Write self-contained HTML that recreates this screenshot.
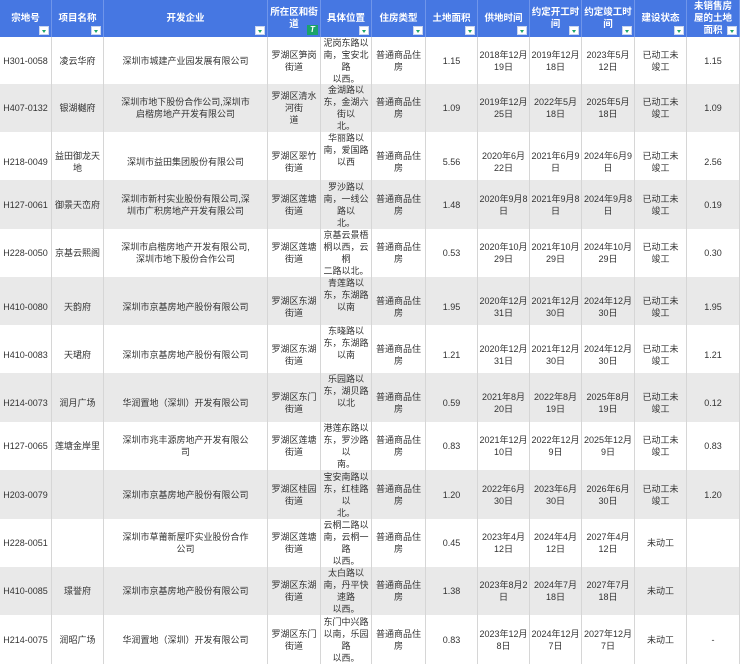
<!DOCTYPE html>
<html><head><meta charset="utf-8">
<style>
*{margin:0;padding:0;box-sizing:border-box}
body{width:740px;height:664px;overflow:hidden;background:#fff;font-family:"Liberation Sans","Noto Sans CJK SC",sans-serif;font-size:9px;color:#333}
.r{position:absolute;left:0;width:740px;display:grid;grid-template-columns:52px 52px 164px 53px 51px 54px 52px 52px 52px 53px 52px 53px}
.r>div{display:flex;align-items:center;justify-content:center;text-align:center;line-height:12px;border-right:1px solid #d6d6d6;position:relative;white-space:nowrap}
.g{background:#e9e9e9}
.h{top:0;height:37px;background:#4677e2}
.h>div{color:#fff;font-weight:bold;font-size:9.5px;border-right:1px solid #6f95ea}
.f{position:absolute;right:2px;bottom:2px;width:10px;height:9px;background:#fff;border:1px solid #c8d4ee}
.f:after{content:"";position:absolute;left:2px;top:3px;border-left:2.5px solid transparent;border-right:2.5px solid transparent;border-top:3px solid #1aa36a}
.fa{position:absolute;right:2px;bottom:2px;width:11px;height:10px;background:#1aa36a;color:#fff;font-size:8px;line-height:10px;font-weight:bold}
</style></head><body>
<div class="r h">
<div>宗地号<i class="f"></i></div><div>项目名称<i class="f"></i></div><div>开发企业<i class="f"></i></div><div>所在区和街<br>道<i class="fa">T</i></div><div>具体位置<i class="f"></i></div><div>住房类型<i class="f"></i></div><div>土地面积<i class="f"></i></div><div>供地时间<i class="f"></i></div><div>约定开工时<br>间<i class="f"></i></div><div>约定竣工时<br>间<i class="f"></i></div><div>建设状态<i class="f"></i></div><div>未销售房<br>屋的土地<br>面积<i class="f"></i></div>
</div>

<div class="r" style="top:37px;height:47px"><div>H301-0058</div><div>凌云华府</div><div>深圳市城建产业园发展有限公司</div><div>罗湖区笋岗<br>街道</div><div>泥岗东路以<br>南，宝安北<br>路<br>以西。</div><div>普通商品住<br>房</div><div>1.15</div><div>2018年12月<br>19日</div><div>2019年12月<br>18日</div><div>2023年5月<br>12日</div><div>已动工未<br>竣工</div><div>1.15</div></div>

<div class="r g" style="top:84px;height:48px"><div>H407-0132</div><div>银湖樾府</div><div>深圳市地下股份合作公司,深圳市<br>启楷房地产开发有限公司</div><div>罗湖区清水<br>河街<br>道</div><div>金湖路以<br>东，金湖六<br>街以<br>北。</div><div>普通商品住<br>房</div><div>1.09</div><div>2019年12月<br>25日</div><div>2022年5月<br>18日</div><div>2025年5月<br>18日</div><div>已动工未<br>竣工</div><div>1.09</div></div>

<div class="r" style="top:132px;height:48px"><div>H218-0049</div><div>益田御龙天<br>地</div><div>深圳市益田集团股份有限公司</div><div>罗湖区翠竹<br>街道</div><div>华丽路以<br>南，爱国路<br>以西<br><br>。</div><div>普通商品住<br>房</div><div>5.56</div><div>2020年6月<br>22日</div><div>2021年6月9<br>日</div><div>2024年6月9<br>日</div><div>已动工未<br>竣工</div><div>2.56</div></div>

<div class="r g" style="top:180px;height:49px"><div>H127-0061</div><div>御景天峦府</div><div>深圳市新村实业股份有限公司,深<br>圳市广积房地产开发有限公司</div><div>罗湖区莲塘<br>街道</div><div>罗沙路以<br>南，一线公<br>路以<br>北。</div><div>普通商品住<br>房</div><div>1.48</div><div>2020年9月8<br>日</div><div>2021年9月8<br>日</div><div>2024年9月8<br>日</div><div>已动工未<br>竣工</div><div>0.19</div></div>

<div class="r" style="top:229px;height:48px"><div>H228-0050</div><div>京基云熙阁</div><div>深圳市启楷房地产开发有限公司,<br>深圳市地下股份合作公司</div><div>罗湖区莲塘<br>街道</div><div>京基云景梧<br>桐以西，云<br>桐<br>二路以北。</div><div>普通商品住<br>房</div><div>0.53</div><div>2020年10月<br>29日</div><div>2021年10月<br>29日</div><div>2024年10月<br>29日</div><div>已动工未<br>竣工</div><div>0.30</div></div>

<div class="r g" style="top:277px;height:48px"><div>H410-0080</div><div>天韵府</div><div>深圳市京基房地产股份有限公司</div><div>罗湖区东湖<br>街道</div><div>青莲路以<br>东，东湖路<br>以南<br><br>。</div><div>普通商品住<br>房</div><div>1.95</div><div>2020年12月<br>31日</div><div>2021年12月<br>30日</div><div>2024年12月<br>30日</div><div>已动工未<br>竣工</div><div>1.95</div></div>

<div class="r" style="top:325px;height:48px"><div>H410-0083</div><div>天珺府</div><div>深圳市京基房地产股份有限公司</div><div>罗湖区东湖<br>街道</div><div>东晓路以<br>东，东湖路<br>以南<br><br>。</div><div>普通商品住<br>房</div><div>1.21</div><div>2020年12月<br>31日</div><div>2021年12月<br>30日</div><div>2024年12月<br>30日</div><div>已动工未<br>竣工</div><div>1.21</div></div>

<div class="r g" style="top:373px;height:49px"><div>H214-0073</div><div>润月广场</div><div>华润置地（深圳）开发有限公司</div><div>罗湖区东门<br>街道</div><div>乐园路以<br>东，湖贝路<br>以北<br><br>。</div><div>普通商品住<br>房</div><div>0.59</div><div>2021年8月<br>20日</div><div>2022年8月<br>19日</div><div>2025年8月<br>19日</div><div>已动工未<br>竣工</div><div>0.12</div></div>

<div class="r" style="top:422px;height:48px"><div>H127-0065</div><div>莲塘金岸里</div><div>深圳市兆丰源房地产开发有限公<br>司</div><div>罗湖区莲塘<br>街道</div><div>港莲东路以<br>东，罗沙路<br>以<br>南。</div><div>普通商品住<br>房</div><div>0.83</div><div>2021年12月<br>10日</div><div>2022年12月<br>9日</div><div>2025年12月<br>9日</div><div>已动工未<br>竣工</div><div>0.83</div></div>

<div class="r g" style="top:470px;height:49px"><div>H203-0079</div><div></div><div>深圳市京基房地产股份有限公司</div><div>罗湖区桂园<br>街道</div><div>宝安南路以<br>东，红桂路<br>以<br>北。</div><div>普通商品住<br>房</div><div>1.20</div><div>2022年6月<br>30日</div><div>2023年6月<br>30日</div><div>2026年6月<br>30日</div><div>已动工未<br>竣工</div><div>1.20</div></div>

<div class="r" style="top:519px;height:48px"><div>H228-0051</div><div></div><div>深圳市草莆新屋吓实业股份合作<br>公司</div><div>罗湖区莲塘<br>街道</div><div>云桐二路以<br>南，云桐一<br>路<br>以西。</div><div>普通商品住<br>房</div><div>0.45</div><div>2023年4月<br>12日</div><div>2024年4月<br>12日</div><div>2027年4月<br>12日</div><div>未动工</div><div></div></div>

<div class="r g" style="top:567px;height:48px"><div>H410-0085</div><div>璟誉府</div><div>深圳市京基房地产股份有限公司</div><div>罗湖区东湖<br>街道</div><div>太白路以<br>南，丹平快<br>速路<br>以西。</div><div>普通商品住<br>房</div><div>1.38</div><div>2023年8月2<br>日</div><div>2024年7月<br>18日</div><div>2027年7月<br>18日</div><div>未动工</div><div></div></div>

<div class="r" style="top:615px;height:49px"><div>H214-0075</div><div>润昭广场</div><div>华润置地（深圳）开发有限公司</div><div>罗湖区东门<br>街道</div><div>东门中兴路<br>以南，乐园<br>路<br>以西。</div><div>普通商品住<br>房</div><div>0.83</div><div>2023年12月<br>8日</div><div>2024年12月<br>7日</div><div>2027年12月<br>7日</div><div>未动工</div><div>-</div></div>
</body></html>
